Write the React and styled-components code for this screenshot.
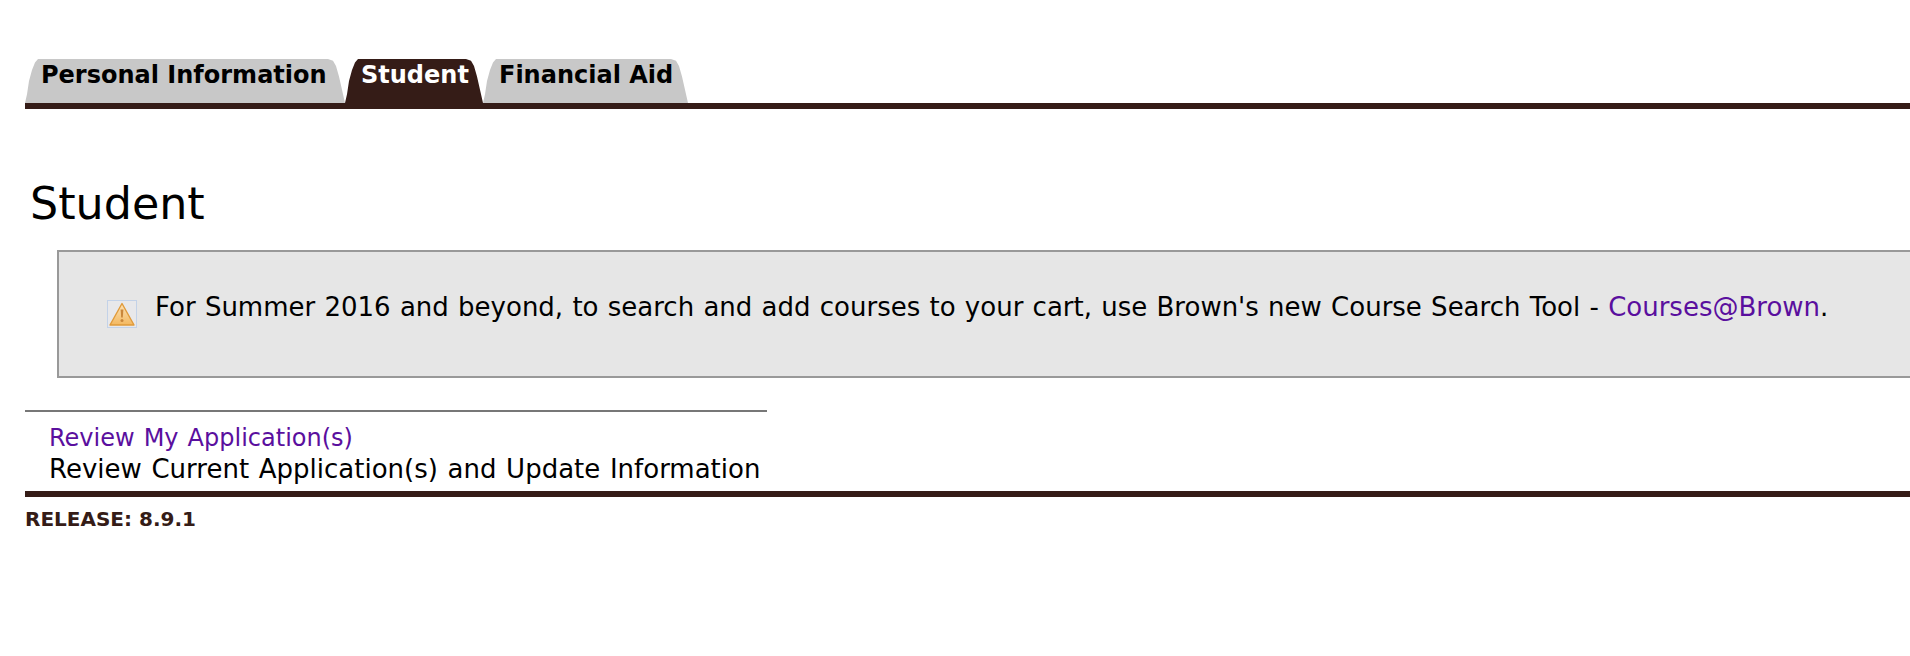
import styled, { createGlobalStyle } from 'styled-components';

const GlobalStyle = createGlobalStyle`
  html, body {
    margin: 0;
    padding: 0;
    background: #fff;
    overflow: hidden;
  }
  body {
    font-family: "DejaVu Sans", Verdana, sans-serif;
    color: #000;
  }
`;

const Page = styled.div`
  width: 1910px;
  height: 656px;
  padding: 59px 0 0 25px;
  box-sizing: border-box;
  overflow: hidden;
`;

const TabBar = styled.div`
  display: flex;
  height: 44px;
  border-bottom: 6px solid #351c17;
`;

const Tab = styled.div`
  width: ${(p) => p.$width}px;
  height: 44px;
  box-sizing: border-box;
  padding-left: 16px;
  font-size: 24px;
  font-weight: 700;
  line-height: 32px;
  white-space: nowrap;
  background: ${(p) => (p.$active ? '#351c17' : '#c8c8c8')};
  color: ${(p) => (p.$active ? '#fff' : '#000')};
  clip-path: polygon(
    0 100%,
    2px 80%,
    4px 50%,
    7px 25%,
    10px 8%,
    13px 0,
    calc(100% - 17px) 0,
    calc(100% - 12px) 4%,
    calc(100% - 9px) 16%,
    calc(100% - 6px) 40%,
    calc(100% - 3px) 70%,
    100% 100%
  );
`;

const Heading = styled.h1`
  margin: 68px 0 0 5px;
  font-size: 44.4px;
  font-weight: 400;
  line-height: 54px;
`;

const Notice = styled.div`
  display: flex;
  align-items: center;
  margin: 19px 0 0 32px;
  width: 1900px;
  height: 128px;
  box-sizing: border-box;
  padding: 0 0 14px 48px;
  background: #e6e6e6;
  border: 2px solid #999;
  font-size: 26px;
  word-spacing: 1px;
  white-space: nowrap;
`;

const NoticeIcon = styled.svg`
  width: 30px;
  height: 28px;
  margin: 13px 18px 0 0;
  flex: none;
`;

const Link = styled.a`
  color: #5a0f9e;
  text-decoration: none;
`;

const SmallLink = styled(Link)`
  font-size: 24px;
`;

const Divider = styled.div`
  width: 742px;
  height: 2px;
  margin-top: 32px;
  background: #777;
`;

const Entry = styled.div`
  padding: 10px 0 0 24px;
  font-size: 26px;
  line-height: 31px;
  word-spacing: 1.4px;
  white-space: nowrap;
`;

const Footer = styled.div`
  margin-top: 6px;
  border-top: 6px solid #351c17;
  padding-top: 10px;
  font-size: 20px;
  font-weight: 700;
  line-height: 24px;
  color: #351c17;
`;

const WarningIcon = () => (
  <NoticeIcon viewBox="0 0 30 28">
    <defs>
      <linearGradient id="warn" x1="0" y1="0" x2="0" y2="1">
        <stop offset="0" stopColor="#fce3b8" />
        <stop offset="1" stopColor="#f3b860" />
      </linearGradient>
    </defs>
    <rect x="0.5" y="0.5" width="29" height="27" fill="#e8e8ea" stroke="#c3d2e8" />
    <path d="M15 3.5 L27 25 H3 Z" fill="url(#warn)" stroke="#e09a3a" strokeWidth="1.4" strokeLinejoin="round" />
    <path d="M13.6 9.5 h2.8 l-0.6 8 h-1.6 Z" fill="#c9863a" />
    <circle cx="15" cy="20.6" r="1.5" fill="#c9863a" />
  </NoticeIcon>
);

const App = () => (
  <Page>
    <GlobalStyle />
    <TabBar>
      <Tab $width={320}>Personal Information</Tab>
      <Tab $width={138} $active>Student</Tab>
      <Tab $width={205}>Financial Aid</Tab>
    </TabBar>
    <Heading>Student</Heading>
    <Notice>
      <WarningIcon />
      <span>
        For Summer 2016 and beyond, to search and add courses to your cart, use Brown's new Course Search Tool - <Link href="#">Courses@Brown</Link>.
      </span>
    </Notice>
    <Divider />
    <Entry>
      <SmallLink href="#">Review My Application(s)</SmallLink>
      <br />
      Review Current Application(s) and Update Information
    </Entry>
    <Footer>RELEASE: 8.9.1</Footer>
  </Page>
);

export default App;
